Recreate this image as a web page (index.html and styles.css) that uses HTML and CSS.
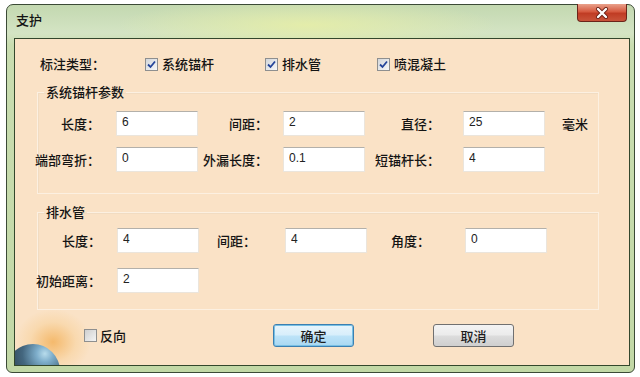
FILE: index.html
```html
<!DOCTYPE html>
<html>
<head lang="zh">
    <meta charset="UTF-8">
    <title>支护</title>
    <link rel="stylesheet" href="styles.css">
</head>
<body>
<div class="dlg">
    <div class="dlg_title">
        <span class="dlg_caption">支护</span>
        <span class="btn_close">
            <svg width="14" height="12" viewBox="0 0 14 12"><path d="M3 2 L11 10 M11 2 L3 10" stroke="#6a1f14" stroke-width="4" stroke-linecap="round"/><path d="M3 2 L11 10 M11 2 L3 10" stroke="#fff" stroke-width="2.4" stroke-linecap="round"/></svg>
        </span>
    </div>
    <div class="dlg_body">
        <div class="glow"></div>
        <div class="globe"></div>

        <!-- 标注类型 -->
        <div class="type_row">
            <span>标注类型：</span>
            <label class="chk"><span class="box"><svg width="11" height="11" viewBox="0 0 11 11"><path d="M2 5.5 L4.5 8 L9 2.5" fill="none" stroke="#23449a" stroke-width="1.8"/></svg></span>系统锚杆</label>
            <label class="chk"><span class="box"><svg width="11" height="11" viewBox="0 0 11 11"><path d="M2 5.5 L4.5 8 L9 2.5" fill="none" stroke="#23449a" stroke-width="1.8"/></svg></span>排水管</label>
            <label class="chk"><span class="box"><svg width="11" height="11" viewBox="0 0 11 11"><path d="M2 5.5 L4.5 8 L9 2.5" fill="none" stroke="#23449a" stroke-width="1.8"/></svg></span>喷混凝土</label>
        </div>

        <!-- 系统锚杆参数 -->
        <fieldset class="grp grp_bolt">
            <legend>系统锚杆参数</legend>
            <div class="grid grid_bolt">
                <span class="lbl c1">长度：</span><input class="txt" type="text" value="6">
                <span class="lbl c3">间距：</span><input class="txt" type="text" value="2">
                <span class="lbl c5">直径：</span><input class="txt" type="text" value="25">
                <span class="unit">毫米</span>
                <span class="lbl c1">端部弯折：</span><input class="txt" type="text" value="0">
                <span class="lbl c3">外漏长度：</span><input class="txt" type="text" value="0.1">
                <span class="lbl c5">短锚杆长：</span><input class="txt" type="text" value="4">
            </div>
        </fieldset>

        <!-- 排水管 -->
        <fieldset class="grp grp_pipe">
            <legend>排水管</legend>
            <div class="grid grid_pipe">
                <span class="lbl c1">长度：</span><input class="txt" type="text" value="4">
                <span class="lbl c3">间距：</span><input class="txt" type="text" value="4">
                <span class="lbl c5">角度：</span><input class="txt" type="text" value="0">
                <span class="lbl c1">初始距离：</span><input class="txt" type="text" value="2">
            </div>
        </fieldset>

        <div class="foot">
            <label class="chk"><span class="box box_off"></span>反向</label>
            <button class="btn btn_ok">确定</button>
            <button class="btn">取消</button>
        </div>
    </div>
</div>
</body>
</html>
```

FILE: styles.css
```css
body,div,fieldset,legend,input,button{ margin:0; padding:0;}

body{
    background-color: #ffffff;
    font-family: "Noto Sans CJK SC", "Noto Sans", sans-serif;
    font-size: 13px;
    font-weight: 500;
    color: #141414;
}

/* 窗口外框 */
.dlg{
    box-sizing: border-box;
    width: 629px;
    height: 369px;
    margin: 4px 0 0 6px;
    padding: 0 4px 6px 7px;
    border: 1px solid #3b4a36;
    border-radius: 7px 7px 6px 6px;

    display: flex;
    flex-direction: column;
    background: radial-gradient(ellipse 190px 26px at 300px 20px, rgba(230,238,168,0.9), rgba(230,238,168,0)),
                linear-gradient(#c3d8b0, #d4e4c4 28px, #c9ddb0 40px, #c2d8a6);
}
.dlg_title{
    height: 33px;
    display: flex;
    align-items: flex-start;
}
.dlg_caption{
    margin: 7px 0 0 2px;
    line-height: 16px;
}
.btn_close{
    box-sizing: border-box;
    width: 50px;
    height: 18px;
    margin: -1px 3px 0 auto;
    border: 1px solid #6b2419;
    border-top: 0;
    border-radius: 0 0 4px 4px;
    background: linear-gradient(#e9a18b, #d65a40 45%, #c03c24 55%, #c9543a);

    display: flex;
    align-items: center;
    justify-content: center;
}

/* 客户区 */
.dlg_body{
    flex: 1;
    position: relative;
    overflow: hidden;
    border: 1px solid #33472c;
    background-color: #fae2c6;
}
.glow{
    position: absolute;
    left: 0;
    top: 270px;
    width: 76px;
    height: 66px;
    border-radius: 50%;
    background: radial-gradient(closest-side, rgba(242,168,70,0.7), rgba(246,196,120,0.3) 60%, rgba(250,226,198,0));
}
.globe{
    position: absolute;
    left: -9px;
    top: 305px;
    width: 54px;
    height: 54px;
    border-radius: 50%;
    background: radial-gradient(circle at 72% 18%, #b8dcec 0, #7eaecb 14%, #44677f 38%, #2b3d4e 70%);
}

.type_row{
    position: relative;
    display: grid;
    grid-template-columns: 105px 120px 112px auto;
    align-items: center;
    height: 16px;
    margin: 17px 0 0 25px;
    line-height: 16px;
}
.chk{
    display: flex;
    align-items: center;
    gap: 4px;
}
.box{
    box-sizing: border-box;
    width: 13px;
    height: 13px;
    border: 1px solid #8e8f8f;
    background: linear-gradient(135deg, #d3d6da, #f6f7f8);

    display: flex;
    align-items: center;
    justify-content: center;
}

/* 分组框 */
.grp{
    position: relative;
    box-sizing: border-box;
    width: 562px;
    min-width: 0;
    margin: 12px 0 0 22px;
    border: 1px solid #fcf0e1;
    box-shadow: 1px 1px 0 #f1dcc2 inset;
}
.grp legend{
    margin-left: 6px;
    padding: 0 2px;
    line-height: 16px;
}
.grp_bolt{
    padding: 11px 0 21px 0;
}
.grp_pipe{
    margin-top: 10px;
    padding: 8px 0 16px 0;
}

.grid{
    display: grid;
    align-items: center;
    margin-left: -4px;
}
.grid_bolt{
    grid-template-columns: 82px 82px 85px 82px 98px 82px auto;
    row-gap: 11px;
}
.grid_pipe{
    grid-template-columns: 83px 82px 86px 82px 98px 82px;
    row-gap: 15px;
}
.lbl{
    text-align: right;
    white-space: nowrap;
}
.grid_bolt .c1{ padding-right: 16px;}
.grid_bolt .c3{ padding-right: 15px;}
.grid_bolt .c5{ padding-right: 23px;}
.grid_pipe .c1{ padding-right: 16px;}
.grid_pipe .c3{ padding-right: 29px;}
.grid_pipe .c5{ padding-right: 35px;}
.unit{
    padding-left: 17px;
}

.txt{
    box-sizing: border-box;
    width: 82px;
    height: 25px;
    padding: 3px 5px 7px;
    border: 1px solid #ebe5dc;
    border-top-color: #b3b0aa;
    background-color: #ffffff;
    font: 12px "Liberation Sans", sans-serif;
    color: #222222;
    outline: none;
}

/* 底部按钮 */
.foot{
    position: relative;
    display: grid;
    grid-template-columns: 189px 160px auto;
    align-items: center;
    margin: 14px 0 0 69px;
}
.foot .chk{
    gap: 3px;
}
.box_off{
    background: linear-gradient(135deg, #cfcfcf, #f4f4f4);
}
.btn{
    box-sizing: border-box;
    width: 81px;
    height: 23px;
    border: 1px solid #707070;
    border-radius: 3px;
    background: linear-gradient(#f3f3f3, #ebebeb 48%, #dcdcdc 52%, #cfcfcf);
    font-family: "Noto Sans CJK SC", sans-serif;
    font-size: 13px;
    font-weight: 500;
    color: #1e1e1e;
}
.btn_ok{
    border-color: #3c7fb1;
    background: linear-gradient(#e8f5fc, #d7eefb 48%, #bde3f8 52%, #a9d8f2);
    box-shadow: 0 0 0 1px #78c0e4 inset;
}
```
